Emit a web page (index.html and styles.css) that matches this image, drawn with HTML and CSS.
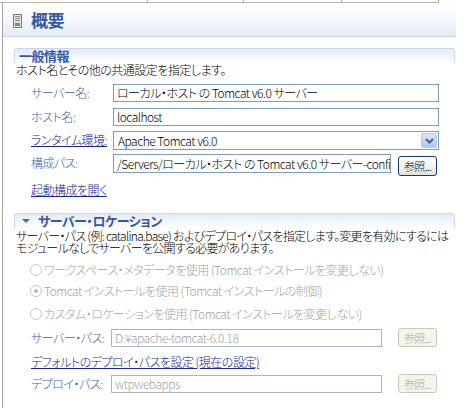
FILE: index.html
```html
<!DOCTYPE html>
<html lang="ja">
<head>
<meta charset="utf-8">
<title>概要</title>
<link rel="stylesheet" href="styles.css">
</head>
<body>
<div class="tabs">
  <span class="tab t1"></span><span class="tab t2"></span><span class="tab t3"></span><span class="tab t4"></span>
</div>
<div class="page">
  <div class="header">
    <svg class="hicon" width="9" height="14" viewBox="0 0 9 14">
      <rect x="0.5" y="0.5" width="8" height="13" fill="#e4e4e4" stroke="#7a7a7a"/>
      <rect x="2" y="2" width="5" height="1" fill="#8a8a8a"/>
      <rect x="2" y="4" width="5" height="1" fill="#8a8a8a"/>
      <rect x="2" y="6" width="5" height="1" fill="#8a8a8a"/>
      <rect x="2" y="9" width="5" height="3" fill="#4caf3c"/>
    </svg>
    <h1 class="title">概要</h1>
  </div>

  <section class="sec sec1">
    <div class="sec-head"><span class="sec-title">一般情報</span></div>
    <p class="desc">ホスト名とその他の共通設定を指定します。</p>
    <div class="row r1">
      <span class="label">サーバー名:</span>
      <div class="field w-full">ローカル・ホスト の Tomcat v6.0 サーバー</div>
    </div>
    <div class="row r2">
      <span class="label">ホスト名:</span>
      <div class="field w-full">localhost</div>
    </div>
    <div class="row r3">
      <a class="label link">ランタイム環境:</a>
      <div class="combo w-full">
        <span class="combo-text">Apache Tomcat v6.0</span>
        <span class="combo-btn">
          <svg width="9" height="6" viewBox="0 0 9 6"><path d="M1 1 L4.5 4.5 L8 1" fill="none" stroke="#4d6185" stroke-width="2"/></svg>
        </span>
      </div>
    </div>
    <div class="row r4">
      <span class="label">構成パス:</span>
      <div class="field w-short">/Servers/ローカル・ホスト の Tomcat v6.0 サーバー-config</div>
      <button class="btn">参照...</button>
    </div>
    <div class="linkrow l1"><a class="link">起動構成を開く</a></div>
  </section>

  <section class="sec sec2">
    <div class="sec-head">
      <span class="twist"></span><span class="sec-title">サーバー・ロケーション</span>
    </div>
    <p class="desc desc2">サーバー・パス (例: catalina.base) およびデプロイ・パスを指定します。変更を有効にするには<br>モジュールなしでサーバーを公開する必要があります。</p>
    <div class="radio rd1"><span class="rb"></span><span class="rtext">ワークスペース・メタデータを使用 (Tomcat インストールを変更しない)</span></div>
    <div class="radio rd2"><span class="rb on"></span><span class="rtext">Tomcat インストールを使用 (Tomcat インストールの制御)</span></div>
    <div class="radio rd3"><span class="rb"></span><span class="rtext">カスタム・ロケーションを使用 (Tomcat インストールを変更しない)</span></div>
    <div class="row r5">
      <span class="label label2">サーバー・パス:</span>
      <div class="field dis w-dis">D:¥apache-tomcat-6.0.18</div>
      <button class="btn btn-dis">参照...</button>
    </div>
    <div class="linkrow l2"><a class="link">デフォルトのデプロイ・パスを設定 (現在の設定)</a></div>
    <div class="row r6">
      <span class="label label2">デプロイ・パス:</span>
      <div class="field dis w-dis">wtpwebapps</div>
      <button class="btn btn-dis">参照...</button>
    </div>
  </section>
</div>
</body>
</html>
```

FILE: styles.css
```css
* { box-sizing: border-box; }
html, body { margin: 0; padding: 0; background: #fff; }
body {
  width: 469px;
  height: 417px;
  overflow: hidden;
  font-family: "Noto Sans CJK JP", "Noto Sans", sans-serif;
  font-size: 12px;
  font-weight: 300;
  font-feature-settings: "palt";
  letter-spacing: -0.5px;
  color: #000;
}

.tabs {
  display: flex;
  width: 439px;
  height: 3px;
  border-bottom: 1px solid #b6b2a4;
}
.tab { height: 2px; border-right: 1px solid #aca899; }
.t1 { width: 148px; }
.t2 { width: 96px; }
.t3 { width: 98px; }
.t4 { width: 97px; }

.page {
  margin-left: 2px;
  width: 454px;
  height: 405px;
  border-left: 1px solid #a3a3a3;
  padding-top: 1px;
}

.header {
  display: flex;
  align-items: center;
  height: 33px;
  padding-left: 10px;
  background: linear-gradient(to bottom, #ffffff 0%, #f6f8fd 45%, #e4ebf8 100%);
  border-bottom: 1px solid #c6d3ea;
}
.hicon { display: block; margin-right: 9px; margin-top: 1px; }
.title {
  margin: 0;
  font-size: 17px;
  font-weight: bold;
  letter-spacing: -0.5px;
  color: #3558a6;
  line-height: 20px;
}

.sec { margin-left: 11px; width: 441px; }
.sec1 { margin-top: 11px; }
.sec2 { margin-top: 16px; }

.sec-head {
  display: flex;
  align-items: center;
  height: 15px;
  padding-left: 4px;
  border: 1px solid #c8d5ee;
  border-bottom: none;
  border-radius: 4px 4px 0 0;
  background: linear-gradient(to bottom, #e3eaf8 0%, #f4f7fd 60%, #ffffff 100%);
}
.sec-title {
  font-size: 13px;
  font-weight: bold;
  color: #3558a6;
  line-height: 14px;
}
.twist {
  width: 0; height: 0;
  border-left: 4px solid transparent;
  border-right: 4px solid transparent;
  border-top: 4px solid #4668bf;
  margin-left: 3px;
  margin-right: 8px;
}

.desc {
  margin: 0;
  padding-left: 2px;
  line-height: 14px;
  height: 14px;
  white-space: nowrap;
}
.desc2 { height: 26px; line-height: 12px; margin-top: 2px; letter-spacing: -0.7px; }

.row { display: flex; align-items: flex-start; padding-left: 17px; }
.r1 { margin-top: 7px; }
.r2 { margin-top: 6px; }
.r3 { margin-top: 5px; }
.r4 { margin-top: 4px; }
.r5 { margin-top: 7px; }
.r6 { margin-top: 6px; }

.label {
  width: 82px;
  flex: none;
  line-height: 18px;
  white-space: nowrap;
  color: #3f62b0;
}
.label2 { width: 80px; }
.link { color: #1a2590; text-decoration: underline; }

.field {
  height: 18px;
  border: 1px solid #7f9db9;
  padding: 0 3px;
  line-height: 16px;
  white-space: nowrap;
  overflow: hidden;
  background: #fff;
}
.w-full { width: 326px; }
.w-short { width: 278px; height: 19px; line-height: 17px; }
.w-dis { width: 271px; }
.dis { color: #a3a3a3; border-color: #a8b5c4; }

.combo {
  display: flex;
  align-items: center;
  justify-content: space-between;
  height: 19px;
  border: 1px solid #7f9db9;
  padding-left: 4px;
  padding-right: 1px;
}
.combo-text { line-height: 17px; }
.combo-btn {
  display: flex;
  align-items: center;
  justify-content: center;
  width: 16px;
  height: 15px;
  border: 1px solid #b5c7f3;
  border-radius: 2px;
  background: linear-gradient(to bottom, #d9e4fd 0%, #c0d1fa 60%, #b2c5f5 100%);
}
.combo-btn svg { display: block; }

.btn {
  flex: none;
  margin-left: 7px;
  margin-top: 2px;
  width: 39px;
  height: 20px;
  padding: 0;
  font: inherit;
  font-size: 11px;
  font-weight: 300;
  letter-spacing: -0.6px;
  white-space: nowrap;
  line-height: 16px;
  color: #000;
  border: 1px solid #123b75;
  border-radius: 3px;
  background: linear-gradient(to bottom, #ffffff 0%, #f3f2ed 60%, #e3e0d6 100%);
}
.btn-dis {
  margin-left: 16px;
  margin-top: -1px;
  color: #aca899;
  border-color: #cbc8bb;
  background: #f5f4ea;
  height: 19px;
}

.linkrow { padding-left: 17px; line-height: 14px; height: 14px; }
.l1 { margin-top: 7px; }
.l2 { margin-top: 8px; }

.radio {
  display: flex;
  align-items: center;
  height: 16px;
  padding-left: 16px;
  color: #a3a3a3;
}
.rd1 { margin-top: 6px; }
.rd2 { margin-top: 5px; }
.rd3 { margin-top: 7px; }
.rb {
  position: relative;
  width: 12px;
  height: 12px;
  border-radius: 50%;
  border: 1px solid #cac7ba;
  background: #fff;
  margin-right: 2px;
  flex: none;
}
.rb.on::after {
  content: "";
  position: absolute;
  left: 3px; top: 3px;
  width: 4px; height: 4px;
  border-radius: 50%;
  background: #bdbab0;
}
.rtext { line-height: 16px; white-space: nowrap; }
```
